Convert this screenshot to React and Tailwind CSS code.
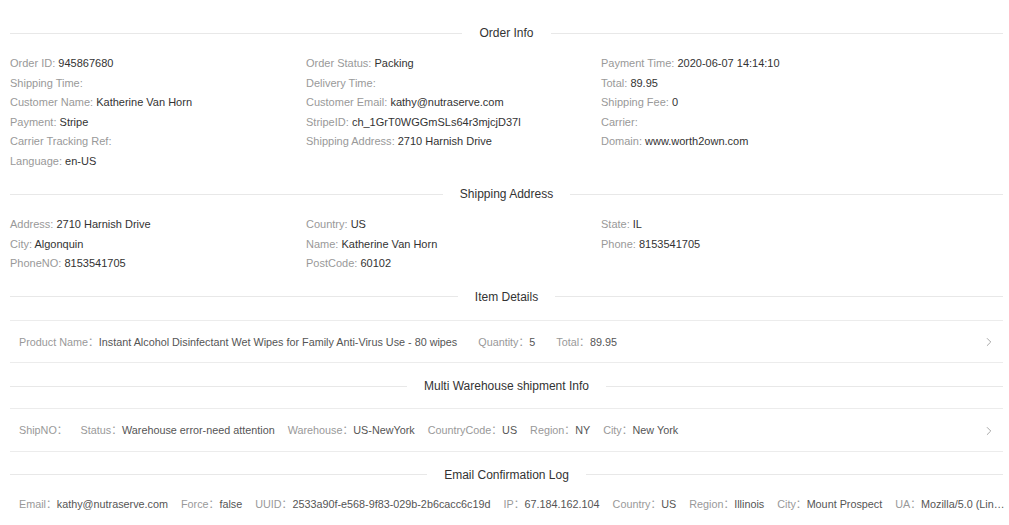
import { ChevronRight } from "lucide-react";

const orderInfo = [
  ["Order ID", "945867680"],
  ["Order Status", "Packing"],
  ["Payment Time", "2020-06-07 14:14:10"],
  ["Shipping Time", ""],
  ["Delivery Time", ""],
  ["Total", "89.95"],
  ["Customer Name", "Katherine Van Horn"],
  ["Customer Email", "kathy@nutraserve.com"],
  ["Shipping Fee", "0"],
  ["Payment", "Stripe"],
  ["StripeID", "ch_1GrT0WGGmSLs64r3mjcjD37l"],
  ["Carrier", ""],
  ["Carrier Tracking Ref", ""],
  ["Shipping Address", "2710 Harnish Drive"],
  ["Domain", "www.worth2own.com"],
  ["Language", "en-US"],
];

const shippingAddress = [
  ["Address", "2710 Harnish Drive"],
  ["Country", "US"],
  ["State", "IL"],
  ["City", "Algonquin"],
  ["Name", "Katherine Van Horn"],
  ["Phone", "8153541705"],
  ["PhoneNO", "8153541705"],
  ["PostCode", "60102"],
];

const itemDetails = [
  ["Product Name", "Instant Alcohol Disinfectant Wet Wipes for Family Anti-Virus Use - 80 wipes"],
  ["Quantity", "5"],
  ["Total", "89.95"],
];

const shipment = [
  ["ShipNO", ""],
  ["Status", "Warehouse error-need attention"],
  ["Warehouse", "US-NewYork"],
  ["CountryCode", "US"],
  ["Region", "NY"],
  ["City", "New York"],
];

// UA is cut short the same way the log table shows it
const emailLog = [
  ["Email", "kathy@nutraserve.com"],
  ["Force", "false"],
  ["UUID", "2533a90f-e568-9f83-029b-2b6cacc6c19d"],
  ["IP", "67.184.162.104"],
  ["Country", "US"],
  ["Region", "Illinois"],
  ["City", "Mount Prospect"],
  ["UA", "Mozilla/5.0 (Lin…"],
];

const Divider = ({ title, className }) => (
  <div className={"flex items-center h-5 text-[12px] text-[#333] " + className}>
    <div className="flex-1 border-t border-[#e8e8e8]" />
    <span className="px-[17px] whitespace-nowrap">{title}</span>
    <div className="flex-1 border-t border-[#e8e8e8]" />
  </div>
);

const Descriptions = ({ data }) => (
  <div className="grid grid-cols-[296px_295px_1fr] mt-[11px] text-[11px] leading-[19.5px]">
    {data.map(([label, value]) => (
      <div key={label} className="whitespace-nowrap">
        <span className="text-[#999]">{label}: </span>
        <span className="text-[#333]">{value}</span>
      </div>
    ))}
  </div>
);

const ListRow = ({ data, gap, className }) => (
  <div className={"flex items-center border-y border-[#ececec] pl-[9px] pr-[7px] pt-[12px] pb-[10px] text-[10.8px] leading-[19.5px] " + className}>
    <div className={"flex flex-1 whitespace-nowrap " + gap}>
      {data.map(([label, value]) => (
        <span key={label}>
          <span className="text-[#999]">{label}：</span>
          <span className="text-[#555]">{value}</span>
        </span>
      ))}
    </div>
    <ChevronRight size={14} strokeWidth={1.3} className="text-[#8c8c8c]" />
  </div>
);

export default function App() {
  return (
    <div
      className="bg-white min-h-[525px] pl-[10px] pr-[6px] pb-4"
      style={{ fontFamily: '"Liberation Sans", Arial, "Noto Sans CJK SC", sans-serif' }}
    >
      <Divider title="Order Info" className="mt-[23px]" />
      <Descriptions data={orderInfo} />

      <Divider title="Shipping Address" className="mt-[13px]" />
      <Descriptions data={shippingAddress} />

      <Divider title="Item Details" className="mt-[13px]" />
      <ListRow data={itemDetails} gap="gap-[21px]" className="mt-[13px]" />

      <Divider title="Multi Warehouse shipment Info" className="mt-[13px]" />
      <ListRow data={shipment} gap="gap-[13px]" className="mt-[12px]" />

      <Divider title="Email Confirmation Log" className="mt-[13px]" />
      <div className="mt-[10px] pl-[9px] text-[10.8px] leading-[19.5px] whitespace-nowrap">
        {emailLog.map(([label, value], i) => (
          <span key={label} className={i > 0 ? "ml-[13px]" : ""}>
            <span className="text-[#999]">{label}：</span>
            <span className="text-[#555]">{value}</span>
          </span>
        ))}
      </div>
    </div>
  );
}
